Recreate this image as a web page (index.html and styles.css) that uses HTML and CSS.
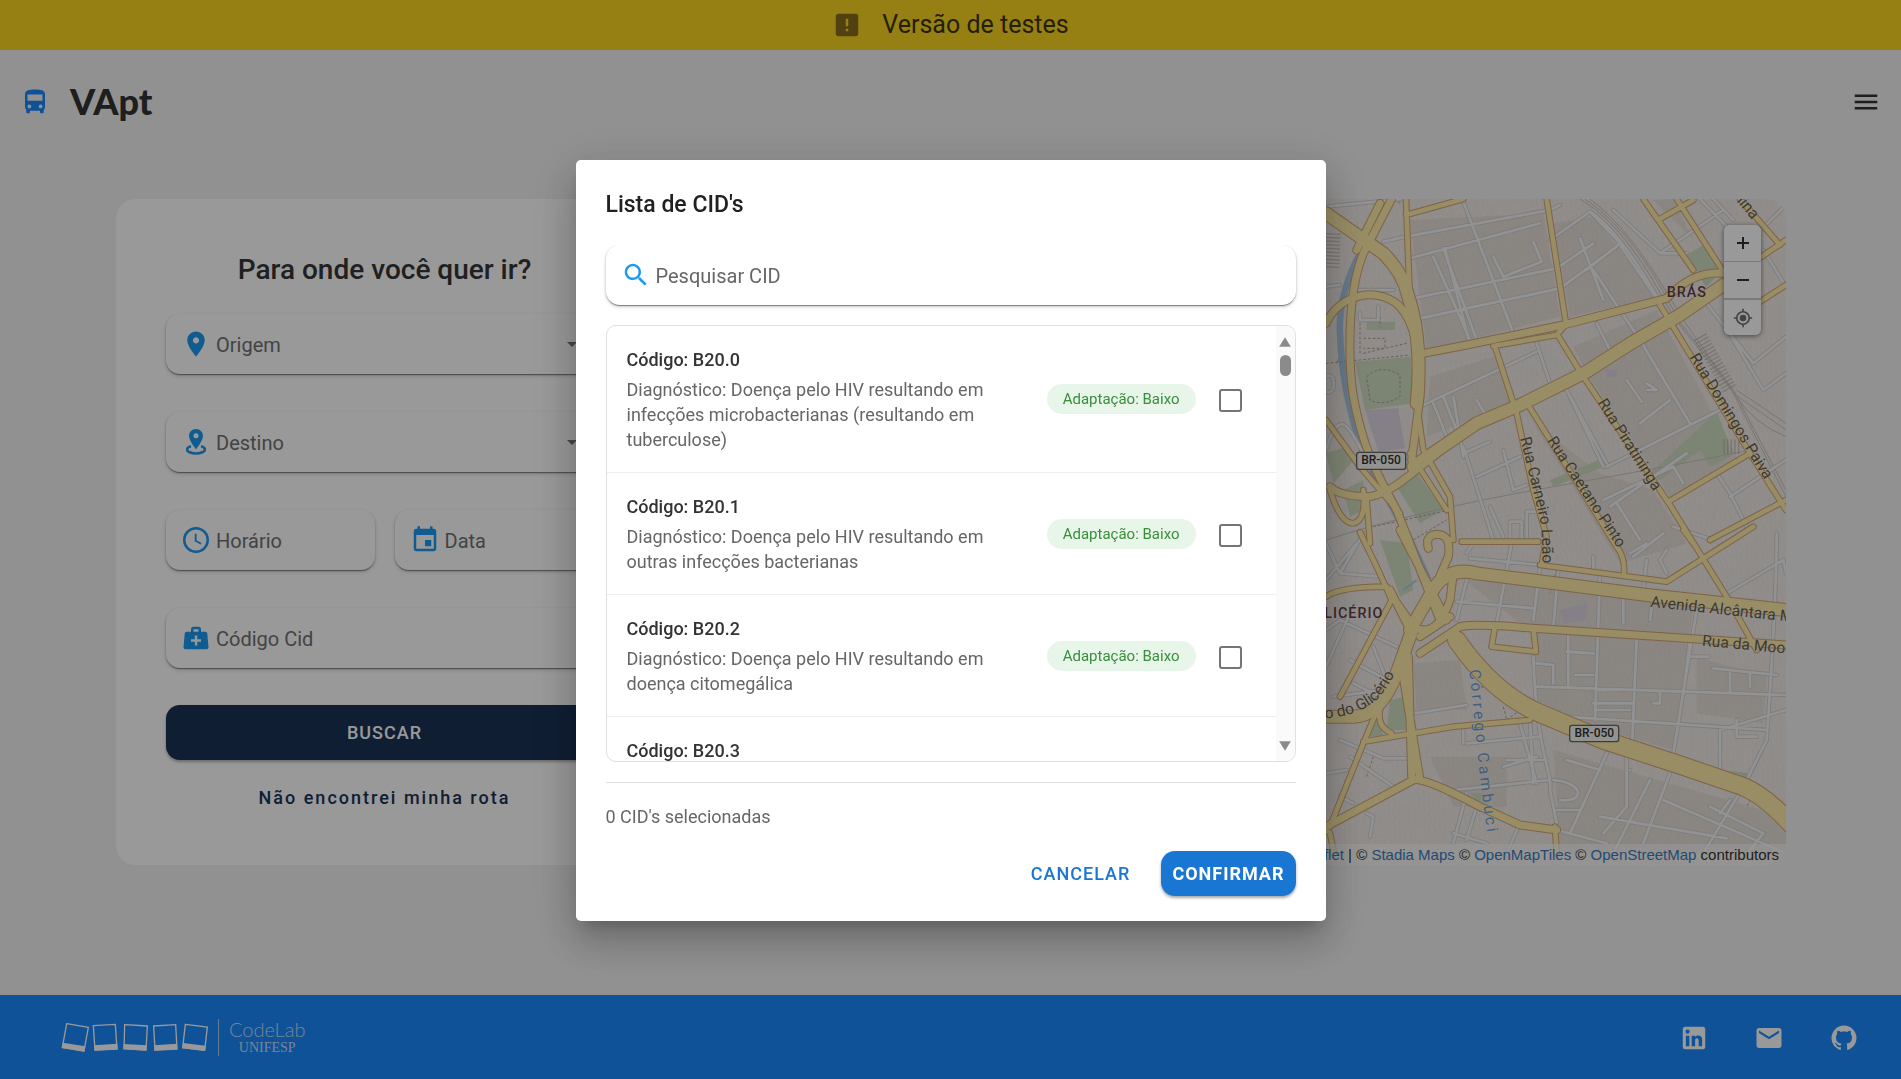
FILE: index.html
```html
<!DOCTYPE html>
<html lang="pt-BR">
<head>
<meta charset="utf-8">
<meta name="viewport" content="width=device-width, initial-scale=1">
<title>VApt</title>
<link rel="stylesheet" href="styles.css">
</head>
<body>
<div class="page">
  <div class="banner">
    <svg class="icon" viewBox="0 0 24 24" aria-hidden="true"><path d="M19 3H5c-1.100 0-2 .9-2 2v14c0 1.100.9 2 2 2h14c1.100 0 2-.9 2-2V5c0-1.100-.9-2-2-2zm-6 14h-2v-2h2v2zm0-4h-2V7h2v6z"/></svg>
    <span>Versão de testes</span>
  </div>

  <header class="topbar">
    <a class="brand" href="#">
      <svg class="icon" viewBox="0 0 24 24" aria-hidden="true"><path d="M4 16c0 .88.39 1.670 1 2.220V20c0 .55.45 1 1 1h1c.55 0 1-.45 1-1v-1h8v1c0 .55.45 1 1 1h1c.55 0 1-.45 1-1v-1.780c.61-.55 1-1.340 1-2.220V6c0-3.500-3.580-4-8-4s-8 .5-8 4v10zm3.500 1c-.83 0-1.500-.67-1.500-1.500S6.670 14 7.500 14s1.500.67 1.500 1.500S8.330 17 7.500 17zm9 0c-.83 0-1.500-.67-1.500-1.500s.67-1.500 1.500-1.500 1.500.67 1.500 1.500-.67 1.500-1.500 1.500zm1.500-6H6V6h12v5z"/></svg>
      <span class="brand-name">VApt</span>
    </a>
    <button class="menu-button" type="button" aria-label="Menu">
      <svg class="icon" viewBox="0 0 24 24" aria-hidden="true"><path d="M3 18h18v-2H3v2zm0-5h18v-2H3v2zm0-7v2h18V6H3z"/></svg>
    </button>
  </header>

  <main class="main">
    <form class="search-card">
      <h1 class="search-title">Para onde você quer ir?</h1>
      <div class="fields">
        <label class="field field-wide">
          <svg class="icon" viewBox="0 0 24 24" aria-hidden="true"><path d="M12 2C8.130 2 5 5.130 5 9c0 5.250 7 13 7 13s7-7.750 7-13c0-3.870-3.130-7-7-7zm0 9.500c-1.380 0-2.500-1.120-2.500-2.500s1.120-2.500 2.500-2.500 2.500 1.120 2.500 2.500-1.120 2.500-2.500 2.500z"/></svg>
          <input class="field-input" type="text" placeholder="Origem" aria-label="Origem">
          <svg class="caret" viewBox="0 0 24 24" aria-hidden="true"><path d="M7 10l5 5 5-5z"/></svg>
        </label>
        <label class="field field-wide">
          <svg class="icon" viewBox="0 0 24 24" aria-hidden="true"><path d="M12 1.500c-3.200 0-5.600 2.400-5.600 5.500 0 4 5.600 10.800 5.600 10.800S17.600 11 17.600 7c0-3.100-2.400-5.500-5.600-5.500zm0 7.400a2 2 0 1 1 0-4 2 2 0 0 1 0 4z"/><path class="stroke" d="M8 15.400c-2 .5-3.100 1.400-3.100 2.500 0 1.900 3.100 3.200 7.100 3.200s7.100-1.300 7.100-3.200c0-1.100-1.100-2-3.100-2.500"/></svg>
          <input class="field-input" type="text" placeholder="Destino" aria-label="Destino">
          <svg class="caret" viewBox="0 0 24 24" aria-hidden="true"><path d="M7 10l5 5 5-5z"/></svg>
        </label>
        <label class="field">
          <svg class="icon" viewBox="0 0 24 24" aria-hidden="true"><circle class="stroke" cx="12" cy="12" r="9.400"/><path class="stroke thin" d="M11.700 7v5.600l4.300 2.400"/></svg>
          <input class="field-input" type="text" placeholder="Horário" aria-label="Horário">
        </label>
        <label class="field">
          <svg class="icon" viewBox="0 0 24 24" aria-hidden="true"><path d="M17 12h-5v5h5v-5zM16 1v2H8V1H6v2H5c-1.110 0-1.990.9-1.990 2L3 19c0 1.100.89 2 2 2h14c1.100 0 2-.9 2-2V5c0-1.100-.9-2-2-2h-1V1h-2zm3 18H5V8h14v11z"/></svg>
          <input class="field-input" type="text" placeholder="Data" aria-label="Data">
        </label>
        <label class="field field-wide">
          <svg class="icon" viewBox="0 0 24 24" aria-hidden="true"><path fill-rule="evenodd" d="M10 3h4a2 2 0 0 1 2 2v2h3.500a1.500 1.500 0 0 1 1.500 1.300l1 11A1.600 1.600 0 0 1 20.500 21h-17A1.600 1.600 0 0 1 2 19.300l1-11A1.500 1.500 0 0 1 4.500 7H8V5a2 2 0 0 1 2-2zm0 4h4V5h-4zm1.100 3v3H8v1.900h3.100V18H13v-3.100h3V13h-3v-3z"/></svg>
          <input class="field-input" type="text" placeholder="Código Cid" aria-label="Código Cid">
        </label>
      </div>
      <button class="submit" type="submit">BUSCAR</button>
      <a class="missing-route" href="#">Não encontrei minha rota</a>
    </form>

    <section class="map" aria-label="Mapa">
      <svg class="map-canvas" viewBox="-2001 27 3399 1998" preserveAspectRatio="xMaxYMin slice" aria-hidden="true">
        <defs>
          <pattern id="blocks" width="46" height="70" patternUnits="userSpaceOnUse" patternTransform="rotate(-14)"><path d="M3 0v32M17 4v28M30 0v30M10 40v26M24 38v30M38 36v34M0 35h46" stroke="#ddd3ca" stroke-width="2" fill="none"/></pattern>
          <g id="minor">
            <path d="M18 50L250 27M190 155L258 140 690 60 720 45M270 205L660 100M280 325L710 235 820 160M300 385L720 295 890 170M340 200L450 450M370 175L470 450M430 35L580 430M520 200L550 260 665 215 640 155M650 460L690 580 740 600 850 830M375 175L445 445M740 600L860 820M780 145L850 330M690 150L810 65 900 160 800 240 M810 65C880 110 960 230 1010 320M900 165L1020 340M820 240L960 450 1110 700M830 400L880 500M1020 190L1210 60M1140 27L1230 120M1180 27L1240 90M1398 45L1240 200M1330 180L1398 290M1100 190L1020 190 880 60M1210 400L1330 600 1398 550M1160 340L1300 520 1398 440M300 650L650 485M340 640L380 740M370 620L410 720M400 620L430 800M430 770L520 1050M430 790L510 755M470 860L600 800M470 630L500 680M550 780L580 900 620 885M860 830L1200 660M870 950L1100 790M1190 850L1230 910M1180 1050L1060 1010M1230 910L1280 1010M890 940L960 1050M1090 880L1060 830 850 930M920 570L965 635M980 580L1010 600 980 600M960 700L1050 630M1230 920L1398 810M510 950L550 1040M570 1050V995H605V1050M620 1050V965H680M18 290L60 285M18 560C50 540 50 620 18 605M120 370V390H175V350M115 300H220M18 780C60 640 90 720 130 790"/>
            <path d="M450 1105L660 1125M410 1235L640 1255M575 1060L530 1300M660 1130L640 1290M715 1140L700 1310M840 1150L825 1590M910 1230V1300M1000 1210L990 1290M1130 1260L1060 1690M440 1170L410 1290M820 1100V1140M650 1490L1398 1515M650 1420L700 1425V1480M745 1335V1490M740 1385L820 1390M765 1455H820M820 1540H935M825 1560H930M950 1350L935 1690M1110 1350L1090 1510M1115 1400H1165M1180 1435L1370 1455M1230 1440V1510M1290 1450V1490M735 1580L1340 1620M1200 1740V1620L1398 1560M1250 1590V1640H1310M1370 1030C1370 1230 1350 1500 1340 1650L1270 1790 1150 1990M640 1400C650 1700 700 1750 690 1800L710 1900 M600 1600L650 1780M630 1590L640 1780M560 1710H680M440 1660L660 1640M400 1800L690 1770M550 1730L650 1700M740 1710L840 1740M860 1690L750 1930M920 1700V1850L850 1930M990 1770L880 1990M1050 1750L970 1960M1030 1830L1398 1990M840 1880L1220 1945M720 1830C790 1840 800 1780 700 1770M710 1860H780M930 1740V1740M1000 1540H1020V1510M1170 1850L1330 1930 1280 1990M440 1810L400 1960M470 1850L440 1950M400 1930L500 1960M710 1920L860 1960M600 1900L560 1990M18 1320L60 1290 230 1370M18 1430L90 1270M90 1410L200 1470M40 1520L190 1500M100 1480L200 1530M285 1570L440 1545M60 1650L190 1705 280 1705M90 1700L220 1790M18 1750L80 1740M60 1820L100 1840M140 1870L160 1880 150 1940M200 1470L160 1370M18 1170L110 1060M18 1060L60 1150 180 1160M60 1150L130 1030M940 1100L1030 1030M980 1110L970 1200M1040 1150L1020 1110 1040 1080M1220 1210L1390 1110 1398 1150M930 1090L980 1060M440 1090L460 1060M430 1660V1620M1200 1870L1230 1830"/>
          </g>
          <g id="mid">
            <path d="M258 27L268 290M258 75L430 27M680 27L737 395M525 470L590 670 640 900 680 1040 665 1125M628 650L760 860 890 1070Q915 1100 912 1150M713 435L790 560 1050 945 1220 1220 1310 1380M1020 345L1290 790 1398 960M970 27L1120 240M1070 27L1210 245M1018 88L1120 30M1260 27L1380 165M1045 935L1290 790M1170 1050L1398 930M1320 335L1398 285M1325 200L1398 150M520 468L710 435 740 400M425 1055H655M660 1125L1040 1175 1300 1010M525 1310L515 1370 648 1385 640 1315M130 1655L400 1610 630 1590M18 1220Q60 1190 200 1190M60 1520L215 1230 170 1130 120 1027M30 1910L130 1660 260 1350M18 1920L30 1930 42 1990M180 1560Q170 1610 215 1630M705 1910L710 1990M1090 1020L1120 1060"/>
            <path d="M18 690L120 830 240 970M30 900Q60 1000 100 1000Q140 990 130 900M290 640L310 780 390 920 400 1050M270 790L380 960M140 930L150 1060M320 1050Q355 1015 390 1050"/>
          </g>
          <g id="ramp">
            <path d="M18 400C60 310 170 290 235 345C290 400 300 500 300 620L275 810M215 27L130 190C80 310 85 520 100 620C130 780 170 850 230 960L360 1290M180 40L110 180M310 490L440 465 730 405 1040 325Q1120 240 1210 250M30 890Q60 920 150 920C240 900 300 820 420 740M210 1210L280 1310Q350 1350 390 1230L400 1150M240 1020L380 1290M265 1400L275 1760M240 1400L300 1770M300 1390L420 1310Q470 1300 640 1315L1398 1365M300 1340L390 1280M270 1320L210 1200M18 1910L280 1770Q310 1760 480 1850L600 1905 710 1920"/>
            <path d="M350 1180L385 1100Q395 1035 352 1033Q315 1035 325 1075"/>
          </g>
          <g id="major">
            <path d="M18 70L190 190Q250 250 265 320C300 420 300 560 290 640M280 830L470 700 600 645 800 545 940 455 1080 375 1210 285M270 1320L345 1190Q390 1130 470 1150L590 1165 980 1215 1398 1260M18 1580H100Q180 1580 230 1450L280 1310"/>
          </g>
          <path id="br" d="M410 1350Q520 1510 660 1570L850 1650 1080 1725 1270 1790Q1340 1820 1420 1910"/>
          <path id="p-domingos" d="M1108 502L1345 888"/>
          <path id="p-piratininga" d="M832 638L1010 920"/>
          <path id="p-caetano" d="M680 752L910 1100"/>
          <path id="p-carneiro" d="M600 745Q640 900 664 1010L668 1120"/>
          <path id="p-alcantara" d="M990 1250L1500 1305"/>
          <path id="p-mooca" d="M1145 1367L1500 1400"/>
          <path id="p-glicerio" d="M15 1585Q110 1580 170 1530Q200 1500 225 1450"/>
          <path id="p-corrego" d="M448 1440C470 1640 480 1840 525 2050"/>
          <path id="p-lina" d="M1232 12L1330 130"/>
        </defs>
        <rect x="-2001" y="27" width="3399" height="1998" fill="#f0ebe7"/>
        <path fill="#e7dfd8" d="M270 90L670 70 720 380 320 480zM700 100L820 80 1010 320 750 380zM330 560L520 500 580 640 320 740zM760 470L1010 360 1250 800 1050 920 800 550zM640 700L840 850 1000 900 1100 1060 900 1120zM420 1160L1120 1250 1060 1680 650 1560 640 1330zM280 1420L420 1410 440 1560 290 1560zM330 1700H560V1850H400zM700 1680L1398 1880V1990H720zM1130 1400L1340 1460 1330 1600 1130 1570zM1000 30L1060 27 1120 150z"/>
        <rect x="18" y="27" width="1380" height="1998" fill="url(#blocks)" opacity=".35"/>
        <path fill="#cfdcc0" d="M105 515L272 500 280 640 135 660zM1100 195L1150 165 1200 240 1140 250zM1140 265L1190 258 1160 290zM985 855L1190 665 1220 740 1230 800 1170 830 1140 780 1020 870zM18 790L80 770 110 800 40 880zM70 900L130 870 130 960 90 980zM230 890L290 850 370 960 300 1000zM180 1050L260 1060 280 1200 240 1220zM210 1530L260 1520 260 1620 200 1620zM690 870L860 800 850 830 700 890zM1200 1740L1290 1750 1280 1780zM450 1810L490 1810 480 1840zM150 1600L180 1590 190 1640 150 1640zM225 27H245L240 45zM140 395H225V420H140z"/>
        <path fill="#ded5e2" d="M135 660L235 655 255 775 175 785zM720 1260L800 1240 800 1290 730 1300zM860 560H890V540H860z"/>
        <path fill="none" stroke="#aac8e4" stroke-width="20" d="M192 27L150 135 105 220Q55 330 60 430C65 560 90 680 130 790L270 1050 325 1170"/>
        <path fill="none" stroke="#aac8e4" stroke-width="5" d="M60 500L50 520M250 1200L290 1170M1330 1680L1280 1780"/>
        <g fill="none" stroke="#c9c4c0" stroke-width="3"><path d="M780 27C900 100 980 230 1060 380L1250 620Q1300 700 1398 740M795 27C915 110 1000 240 1075 390L1240 600 1398 900M810 27C930 120 1000 240 1090 390L1230 590 1398 920M1250 600L1398 700M1240 610L1398 720M18 1050Q300 960 700 890T1290 780"/><path stroke="#b79c93" stroke-dasharray="8 6" d="M18 520L270 495M140 560Q180 520 240 555L240 620Q190 650 150 630ZM120 490V390M130 490L260 460M180 380V410M160 1010L390 960M280 1050L380 990M130 445H195V475H130M550 1550L560 1590 640 1530M710 1140L690 1210M1310 1790L1280 1850M160 1700L140 1760"/></g>
        <g fill="none" stroke="#b2a8a0" stroke-width="44" stroke-dasharray="4 7" opacity=".6"><path d="M1140 440L1230 600M40 130L35 240M1210 770H1265"/></g>
        <g fill="none" stroke-linejoin="round" stroke-linecap="round">
          <use href="#minor" stroke="#cfcdcd" stroke-width="13"/><use href="#minor" stroke="#f4f4f4" stroke-width="8"/>
          <use href="#mid" stroke="#d2a478" stroke-width="20"/><use href="#ramp" stroke="#d2a478" stroke-width="27"/><use href="#major" stroke="#d2a478" stroke-width="42"/><use href="#br" stroke="#d2a478" stroke-width="58"/>
          <use href="#mid" stroke="#fdeba8" stroke-width="14"/><use href="#ramp" stroke="#fdeba8" stroke-width="21"/><use href="#major" stroke="#fdeba8" stroke-width="36"/><use href="#br" stroke="#fdeba8" stroke-width="52"/>
        </g>
        <g class="street">
          <text><textPath href="#p-domingos">Rua Domingos Paiva</textPath></text>
          <text><textPath href="#p-piratininga">Rua Piratininga</textPath></text>
          <text><textPath href="#p-caetano">Rua Caetano Pinto</textPath></text>
          <text><textPath href="#p-carneiro">Rua Carneiro Leão</textPath></text>
          <text><textPath href="#p-alcantara">Avenida Alcântara Machado</textPath></text>
          <text><textPath href="#p-mooca">Rua da Mooca</textPath></text>
          <text><textPath href="#p-glicerio">o do Glicério</textPath></text>
          <text><textPath href="#p-lina">olina</textPath></text>
        </g>
        <text class="stream"><textPath href="#p-corrego">Córrego Cambuci</textPath></text>
        <g class="district"><text x="1040" y="320">BRÁS</text><text x="190" y="1284" text-anchor="end">GLICÉRIO</text></g>
        <g class="shield">
          <rect x="110" y="787" width="147" height="51" rx="7"/><text x="183" y="822">BR-050</text>
          <rect x="749" y="1606" width="147" height="49" rx="7"/><text x="823" y="1640">BR-050</text>
        </g>
      </svg>
      <div class="map-controls">
        <button type="button" aria-label="Aproximar"><svg viewBox="0 0 24 24"><path d="M12 6v12M6 12h12"/></svg></button>
        <button type="button" aria-label="Afastar"><svg viewBox="0 0 24 24"><path d="M6 12h12"/></svg></button>
        <button class="locate" type="button" aria-label="Minha localização"><svg viewBox="0 0 24 24"><circle cx="12" cy="12" r="7.500"/><path d="M12 1v3.500M12 19.500V23M1 12h3.500M19.500 12H23"/><circle class="dot" cx="12" cy="12" r="3"/></svg></button>
      </div>
      <div class="attribution"><a href="#">Leaflet</a> | © <a href="#">Stadia Maps</a> © <a href="#">OpenMapTiles</a> © <a href="#">OpenStreetMap</a> contributors</div>
    </section>
  </main>

  <footer class="footer">
    <a class="lab" href="#" aria-label="CodeLab Unifesp">
      <svg class="polaroids" viewBox="183 117 444 111" aria-hidden="true">
        <g class="frames"><path d="M200 131L265 142 252 213 187 202z"/><path d="M280 137L346 133 351 207 285 210z"/><path d="M374 134L442 138 438 210 372 206z"/><path d="M461 138L527 134 531 207 465 210z"/><path d="M556 133L622 141 614 211 548 203z"/></g>
        <g class="bases"><path d="M188 188L256 199 253 215 185 204z"/><path d="M282 196L352 191 353 208 284 212z"/><path d="M371 192L440 196 439 212 370 208z"/><path d="M462 196L531 191 532 208 463 212z"/><path d="M549 189L617 197 615 213 546 205z"/></g>
      </svg>
      <span class="lab-name"><span class="lab-top">CodeLab</span><span class="lab-bottom">UNIFESP</span></span>
    </a>
    <nav class="social">
      <a href="#" aria-label="LinkedIn"><svg class="icon" viewBox="0 0 24 24"><path d="M19 3a2 2 0 0 1 2 2v14a2 2 0 0 1-2 2H5a2 2 0 0 1-2-2V5a2 2 0 0 1 2-2h14m-.5 15.500v-5.300a3.260 3.260 0 0 0-3.260-3.260c-.85 0-1.840.52-2.320 1.300v-1.110h-2.790v8.370h2.790v-4.930c0-.77.62-1.400 1.390-1.400a1.400 1.400 0 0 1 1.400 1.400v4.930h2.790M6.880 8.560a1.680 1.680 0 0 0 1.680-1.680c0-.93-.75-1.690-1.680-1.690a1.690 1.690 0 0 0-1.690 1.690c0 .93.76 1.680 1.690 1.680m1.390 9.940v-8.370H5.500v8.370h2.770z"/></svg></a>
      <a href="#" aria-label="E-mail"><svg class="icon" viewBox="0 0 24 24"><path d="M20 4H4c-1.100 0-1.990.9-1.990 2L2 18c0 1.100.9 2 2 2h16c1.100 0 2-.9 2-2V6c0-1.100-.9-2-2-2zm0 4l-8 5-8-5V6l8 5 8-5v2z"/></svg></a>
      <a href="#" aria-label="GitHub"><svg class="icon" viewBox="0 0 24 24"><path d="M12 2A10 10 0 0 0 2 12c0 4.420 2.870 8.170 6.840 9.500.5.080.66-.23.66-.5v-1.690c-2.770.6-3.360-1.340-3.360-1.340-.46-1.160-1.110-1.470-1.110-1.470-.91-.62.07-.6.07-.6 1 .07 1.530 1.030 1.530 1.030.87 1.520 2.340 1.070 2.910.83.09-.65.35-1.090.63-1.340-2.220-.25-4.550-1.110-4.550-4.920 0-1.110.38-2 1.030-2.710-.1-.25-.45-1.290.1-2.640 0 0 .84-.27 2.750 1.020.79-.22 1.650-.33 2.500-.33.85 0 1.710.11 2.500.33 1.910-1.290 2.750-1.020 2.750-1.020.55 1.350.2 2.390.1 2.640.65.71 1.030 1.600 1.030 2.710 0 3.820-2.340 4.660-4.570 4.910.36.31.69.92.69 1.850V21c0 .27.16.59.67.5C19.140 20.160 22 16.420 22 12A10 10 0 0 0 12 2z"/></svg></a>
    </nav>
  </footer>
</div>

<div class="backdrop">
  <div class="dialog" role="dialog" aria-modal="true" aria-labelledby="dialog-title">
    <h2 class="dialog-title" id="dialog-title">Lista de CID's</h2>
    <div class="dialog-search">
      <label class="field">
        <svg class="icon" viewBox="0 0 24 24" aria-hidden="true"><path d="M15.500 14h-.79l-.28-.27C15.410 12.590 16 11.110 16 9.500 16 5.910 13.090 3 9.500 3S3 5.910 3 9.500 5.910 16 9.500 16c1.610 0 3.090-.59 4.230-1.570l.27.28v.79l5 4.990L20.490 19l-4.990-5zm-6 0C7.010 14 5 11.990 5 9.500S7.010 5 9.500 5 14 7.010 14 9.500 11.990 14 9.500 14z"/></svg>
        <input class="field-input" type="text" placeholder="Pesquisar CID" aria-label="Pesquisar CID">
      </label>
    </div>
    <div class="list-box">
      <ul class="cid-list">
        <li class="cid">
          <label class="cid-text" for="cid-0"><span class="cid-code">Código: B20.0</span><span class="cid-desc">Diagnóstico: Doença pelo HIV resultando em infecções microbacterianas (resultando em tuberculose)</span></label>
          <span class="badge">Adaptação: Baixo</span>
          <input class="check" type="checkbox" id="cid-0">
        </li>
        <li class="cid">
          <label class="cid-text" for="cid-1"><span class="cid-code">Código: B20.1</span><span class="cid-desc">Diagnóstico: Doença pelo HIV resultando em outras infecções bacterianas</span></label>
          <span class="badge">Adaptação: Baixo</span>
          <input class="check" type="checkbox" id="cid-1">
        </li>
        <li class="cid">
          <label class="cid-text" for="cid-2"><span class="cid-code">Código: B20.2</span><span class="cid-desc">Diagnóstico: Doença pelo HIV resultando em doença citomegálica</span></label>
          <span class="badge">Adaptação: Baixo</span>
          <input class="check" type="checkbox" id="cid-2">
        </li>
        <li class="cid">
          <label class="cid-text" for="cid-3"><span class="cid-code">Código: B20.3</span></label>
        </li>
      </ul>
      <div class="scrollbar" aria-hidden="true">
        <svg class="scroll-arrow" viewBox="0 0 12 10"><path d="M6 1l5 8H1z"/></svg>
        <span class="scroll-thumb"></span>
        <svg class="scroll-arrow scroll-down" viewBox="0 0 12 10"><path d="M6 9l5-8H1z"/></svg>
      </div>
    </div>
    <p class="selected-count">0 CID's selecionadas</p>
    <div class="dialog-actions">
      <button class="button-text" type="button">CANCELAR</button>
      <button class="button-filled" type="button">CONFIRMAR</button>
    </div>
  </div>
</div>
</body>
</html>
```
FILE: styles.css
```css
* { box-sizing: border-box; }

body {
  margin: 0;
  background: #f2f2f2;
  color: #333;
  font-family: Roboto, "Liberation Sans", sans-serif;
  font-size: 18px;
}

h1, h2, p, ul { margin: 0; padding: 0; }
a { text-decoration: none; color: inherit; }
button { font: inherit; border: 0; padding: 0; background: none; cursor: pointer; }

.icon { width: 30px; height: 30px; flex: none; display: block; fill: currentColor; }
.icon .stroke { fill: none; stroke: currentColor; stroke-width: 2; }
.icon .thin { stroke-width: 1.500; }

.page { min-height: 100vh; display: flex; flex-direction: column; }

.banner {
  height: 50px;
  padding-bottom: 1px;
  display: flex;
  align-items: center;
  justify-content: center;
  gap: 20px;
  background: #fcd620;
  color: #3c3408;
  font-size: 25px;
}
.banner .icon { color: #876c1c; }

.topbar {
  height: 105px;
  padding: 0 20px 1px;
  display: flex;
  align-items: center;
  justify-content: space-between;
}
.brand { display: flex; align-items: center; gap: 20px; color: #1a88fc; }
.brand-name { padding-bottom: 2px; font-family: Lato, sans-serif; font-weight: 900; font-size: 36px; line-height: 44px; color: #333; }
.menu-button { color: #333; }

.main { flex: 1; padding: 44px 115px 0 116px; display: flex; align-items: flex-start; }

.search-card {
  flex: 0 0 537px;
  height: 666px;
  padding: 51px 50px 50px;
  border-radius: 20px;
  background: #fff;
  display: flex;
  flex-direction: column;
}
.search-title { font-size: 28px; line-height: 40px; font-weight: 500; text-align: center; color: #363636; }
.fields { margin: 24px 0 37px; display: grid; grid-template-columns: 1fr 1fr; gap: 38px 20px; }
.field {
  height: 60px;
  min-width: 0;
  padding: 0 15px;
  display: flex;
  align-items: center;
  gap: 5px;
  border-radius: 14px;
  background: #fff;
  color: #1b9af0;
  box-shadow: 0 2px 1px -1px rgba(0, 0, 0, .3), 0 1px 2px rgba(0, 0, 0, .24), 0 2px 4px rgba(0, 0, 0, .14);
}
.field-wide { grid-column: 1 / -1; }
.field-input { flex: 1; min-width: 0; border: 0; outline: 0; padding: 2px 0 0; background: none; color: #333; font: inherit; font-size: 20px; }
.field-input::placeholder { color: #717171; opacity: 1; }
.caret { width: 24px; height: 24px; margin-right: 4px; fill: #757575; }

.submit {
  height: 55px;
  border-radius: 14px;
  background: #1a3256;
  color: #fff;
  font-weight: 500;
  letter-spacing: 1px;
  box-shadow: 0 2px 3px rgba(0, 0, 0, .3);
}
.missing-route { margin-top: 26px; text-align: center; line-height: 24px; font-weight: 500; letter-spacing: 2px; color: #1a3256; }

.map { position: relative; flex: 1; height: 666px; border-radius: 20px; overflow: hidden; }
.map-canvas { width: 100%; height: 100%; display: block; }
.street { font-size: 47px; fill: #6a604c; }
.stream { font-size: 47px; fill: #6fa0d0; letter-spacing: 9px; }
.district { font-size: 43px; font-weight: 500; fill: #623f45; letter-spacing: 3px; }
.street, .stream, .district { paint-order: stroke; stroke: rgba(255, 255, 255, .35); stroke-width: 4px; }
.shield rect { fill: #f4f4f0; stroke: #666; stroke-width: 4; }
.shield text { font-size: 36px; font-weight: 500; fill: #333; text-anchor: middle; }

.map-controls { position: absolute; top: 26px; right: 25px; width: 37px; border-radius: 6px; overflow: hidden; box-shadow: 0 1px 5px rgba(0, 0, 0, .5); }
.map-controls button { width: 100%; height: 37px; display: flex; align-items: center; justify-content: center; background: #fff; border-bottom: 1px solid #ccc; }
.map-controls .locate { height: 36px; border-bottom: 0; border-top: 1px solid #ccc; }
.map-controls svg { width: 24px; height: 24px; fill: none; stroke: #333; stroke-width: 2; }
.map-controls .locate svg { width: 20px; height: 20px; stroke: #707070; }
.map-controls .locate .dot { fill: #707070; }

.attribution {
  position: absolute;
  right: 0;
  bottom: 0;
  padding: 0 7px;
  line-height: 21px;
  font-family: "Liberation Sans", Arial, sans-serif;
  font-size: 15px;
  color: #333;
  background: rgba(255, 255, 255, .6);
}
.attribution a { color: #3a7cc0; }

.footer { height: 84px; padding: 1px 42px 0 61px; display: flex; align-items: center; justify-content: space-between; background: #1989fd; color: #fff; }
.lab { display: flex; align-items: center; gap: 9px; }
.polaroids { width: 148px; height: 37px; }
.frames { fill: none; stroke: #fff; stroke-width: 4; }
.bases { fill: #fff; }
.lab-name { padding-left: 10px; height: 37px; display: flex; flex-direction: column; align-items: center; justify-content: center; border-left: 1px solid #a8d0f8; color: #c4dffa; }
.lab-top { font-family: Lato, sans-serif; font-weight: 300; font-size: 20px; line-height: 20px; }
.lab-bottom { font-family: "Liberation Serif", serif; font-size: 14px; line-height: 17px; }
.social { display: flex; gap: 45px; }

.backdrop {
  position: fixed;
  inset: 0;
  padding-top: 2px;
  display: flex;
  align-items: center;
  justify-content: center;
  background: rgba(0, 0, 0, .4);
}
.dialog {
  width: 750px;
  max-width: calc(100% - 64px);
  padding: 25px 30px;
  border-radius: 5px;
  background: #fff;
  box-shadow: 0 11px 15px -7px rgba(0, 0, 0, .2), 0 24px 38px 3px rgba(0, 0, 0, .14), 0 9px 46px 8px rgba(0, 0, 0, .12);
}
.dialog-title { line-height: 40px; font-size: 23px; font-weight: 500; color: #212121; }
.dialog-search { margin: 20px -4px 0; padding: 0 4px 6px; overflow: hidden; }
.dialog-search .field-input::placeholder { color: #666; }

.list-box { margin-top: 14px; height: 437px; display: flex; border: 1px solid #e0e0e0; border-radius: 10px; overflow: hidden; }
.cid-list { flex: 1; list-style: none; overflow: hidden; }
.cid { padding: 20px 30px 20px 20px; display: flex; align-items: center; border-bottom: 1px solid #eee; }
.cid-text { flex: 1; padding-right: 20px; }
.cid-code, .cid-desc { display: block; }
.cid-code { margin-bottom: 4px; line-height: 27px; font-weight: 500; color: #333; }
.cid-desc { line-height: 25px; color: #666; }
.badge { padding: 0 16px; line-height: 30px; border-radius: 15px; background: #e8f5e9; color: #388e3c; font-size: 15px; }
.check { appearance: none; width: 23px; height: 23px; margin: 3px 4px 0 23px; border: 2px solid #757575; border-radius: 3px; background: #fff; }

.scrollbar { width: 19px; padding: 10px 0 9px; display: flex; flex-direction: column; align-items: center; background: #fafafa; }
.scroll-arrow { width: 14px; height: 12px; fill: #8b8b8b; }
.scroll-thumb { width: 11px; height: 21px; margin-top: 7px; border-radius: 6px; background: #8b8b8b; }
.scroll-down { margin-top: auto; }

.selected-count { margin-top: 20px; padding-top: 22px; border-top: 1px solid #e0e0e0; line-height: 24px; color: #666; }
.dialog-actions { margin-top: 22px; display: flex; justify-content: flex-end; gap: 20px; }
.button-text, .button-filled { height: 45px; padding: 0 11px; border-radius: 14px; font-weight: 500; letter-spacing: 1px; color: #1976d2; }
.button-filled { background: #1976d2; color: #fff; font-weight: 700; box-shadow: 0 2px 3px rgba(0, 0, 0, .35); }
```
